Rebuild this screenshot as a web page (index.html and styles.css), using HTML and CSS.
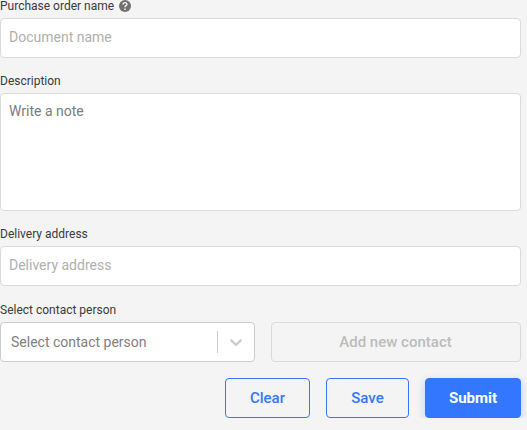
FILE: index.html
```html
<!DOCTYPE html>
<html lang="en">
<head>
    <meta charset="UTF-8">
    <meta name="viewport" content="width=device-width, initial-scale=1.0">
    <title>Purchase order</title>
    <link rel="stylesheet" href="styles.css">
</head>
<body>
    <form class="order-form">
        <div class="field">
            <label class="label" for="name">Purchase order name
                <svg class="help-icon" width="12" height="12" viewBox="2 2 20 20">
                    <circle cx="12" cy="12" r="10" fill="currentColor"/>
                    <path d="M8.800 9.600c0-4.200 6.400-4.200 6.400-.6 0 2.300-3.200 2.600-3.200 5" fill="none" stroke="#f4f4f4" stroke-width="2.400"/>
                    <path d="M10.700 16h2.600v2.500h-2.600z" fill="#f4f4f4"/>
                </svg>
            </label>
            <input class="input" id="name" type="text" placeholder="Document name">
        </div>
        <div class="field">
            <label class="label" for="description">Description</label>
            <textarea class="input textarea" id="description" placeholder="Write a note"></textarea>
        </div>
        <div class="field">
            <label class="label" for="address">Delivery address</label>
            <input class="input" id="address" type="text" placeholder="Delivery address">
        </div>
        <div class="field field-contact">
            <span class="label">Select contact person</span>
            <div class="contact-row">
                <div class="select">
                    <span class="select-value">Select contact person</span>
                    <span class="select-separator"></span>
                    <svg class="select-arrow" width="20" height="20" viewBox="0 0 20 20">
                        <path fill="currentColor" d="M4.516 7.548c0.436-0.446 1.043-0.481 1.576 0l3.908 3.747 3.908-3.747c0.533-0.481 1.141-0.446 1.574 0 0.436 0.445 0.408 1.197 0 1.615-0.406 0.418-4.695 4.502-4.695 4.502-0.217 0.223-0.502 0.335-0.787 0.335s-0.570-0.112-0.789-0.335c0 0-4.287-4.084-4.695-4.502s-0.436-1.170 0-1.615z"/>
                    </svg>
                </div>
                <button class="btn btn-disabled" type="button" disabled>Add new contact</button>
            </div>
        </div>
        <div class="actions">
            <button class="btn btn-outline" type="reset">Clear</button>
            <button class="btn btn-outline" type="button">Save</button>
            <button class="btn btn-primary" type="submit">Submit</button>
        </div>
    </form>
</body>
</html>
```
FILE: styles.css
```css
* {
    box-sizing: border-box;
}
body {
    margin: 0;
    background: #f4f4f4;
    color: #3a3a3a;
    font-family: Roboto, Arial, sans-serif;
    overflow: hidden;
}
.order-form {
    width: 521px;
}
.field {
    margin-bottom: 17px;
}
.label {
    display: flex;
    align-items: center;
    gap: 5px;
    height: 12px;
    margin-bottom: 6px;
    font-size: 12px;
    line-height: 12px;
}
.help-icon {
    color: #707070;
}
.input {
    display: block;
    width: 100%;
    height: 40px;
    padding: 0 8px 2px;
    border: 1px solid #d8dcdc;
    border-radius: 4px;
    background: #fff;
    font-family: inherit;
    font-size: 14px;
    outline: none;
}
.input::placeholder {
    color: #b0b0b0;
}
.textarea {
    height: 118px;
    padding-top: 9px;
    resize: none;
}
.textarea::placeholder {
    color: #7c7c7c;
}
.field-contact {
    margin-top: 18px;
    margin-bottom: 16px;
}
.contact-row {
    display: grid;
    grid-template-columns: 255px 250px;
    gap: 16px;
}
.select {
    display: flex;
    align-items: center;
    height: 40px;
    border: 1px solid #ccc;
    border-radius: 4px;
    background: #fff;
}
.select-value {
    flex: 1;
    padding-left: 10px;
    color: #808080;
    font-size: 14px;
}
.select-separator {
    width: 1px;
    height: 22px;
    background: #ccc;
}
.select-arrow {
    margin: 0 8px;
    color: #ccc;
}
.btn {
    height: 40px;
    padding: 0 24px;
    border: 1px solid;
    border-radius: 4px;
    background: transparent;
    font-family: inherit;
    font-size: 15px;
    font-weight: 500;
}
.btn-disabled {
    padding-right: 25px;
    border-color: #dadada;
    color: #bcbcbc;
}
.btn-outline {
    width: 85px;
    padding: 0;
    border-color: #3377ff;
    color: #3377ff;
}
.btn-outline + .btn-outline {
    width: 83px;
}
.btn-primary {
    width: 96px;
    padding: 0;
    border-color: #3377ff;
    background: #3377ff;
    color: #fff;
    font-weight: 700;
    box-shadow: 0 3px 8px rgba(51, 119, 255, 0.3);
}
.actions {
    display: flex;
    justify-content: flex-end;
    gap: 16px;
}
```
